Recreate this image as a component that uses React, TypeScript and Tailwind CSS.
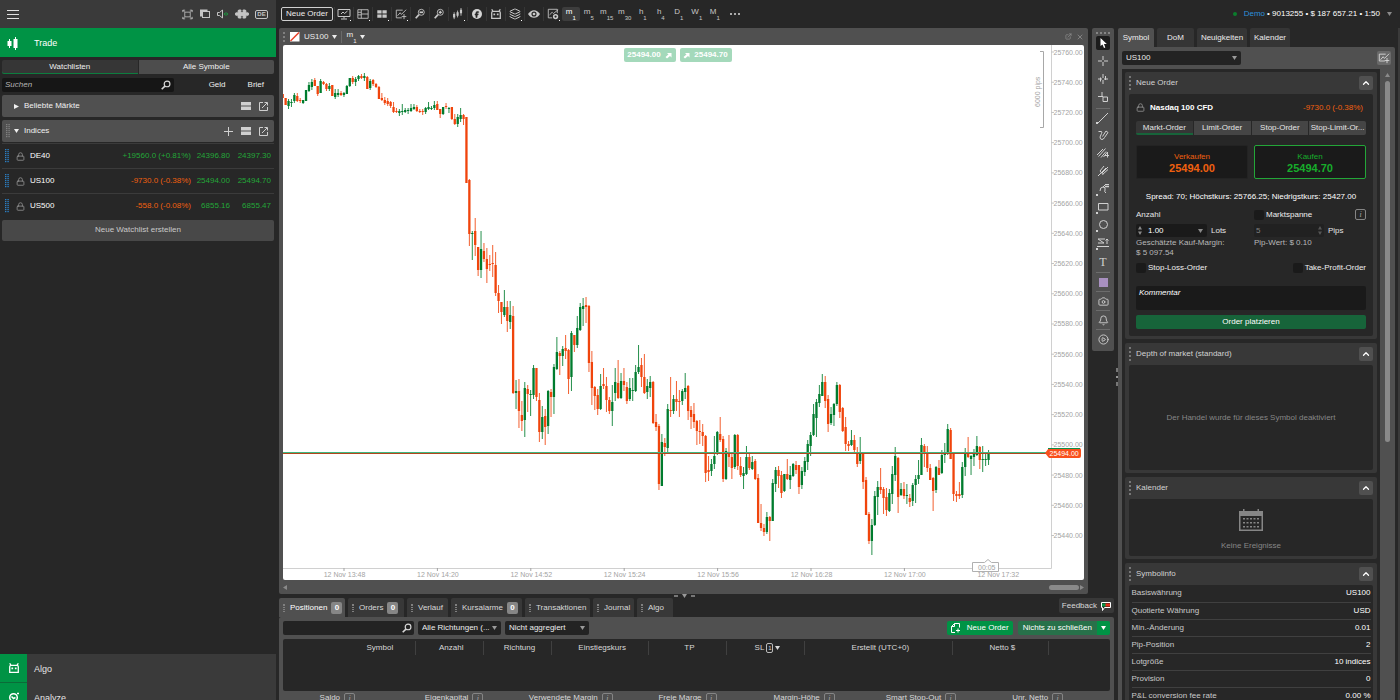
import React from 'react';
import {
  Bell,
  Camera,
  ChevronUp,
  CirclePlay,
  ExternalLink,
  Facebook,
  Layers,
  Lock,
  Puzzle,
  Search,
  X,
} from 'lucide-react';

/* ---------- data ---------- */

// [open, high, low, close] per minute, in chart units (y grows downwards)
const CANDLES: number[][] = [
  [94, 94, 98, 98], [98, 98, 105, 105], [106, 99, 109, 101], [103, 99, 107, 102], [101, 93, 103, 95],
  [96, 93, 102, 101], [100, 98, 103, 101], [103, 100, 104, 100], [101, 90, 101, 90], [91, 82, 92, 85],
  [87, 79, 90, 82], [80, 78, 86, 86], [86, 86, 96, 94], [93, 79, 93, 81], [82, 81, 85, 84],
  [84, 83, 91, 89], [89, 83, 91, 86], [85, 85, 96, 96], [97, 89, 99, 93], [95, 89, 97, 93],
  [93, 91, 96, 95], [95, 92, 97, 93], [94, 85, 94, 86], [86, 78, 87, 78], [78, 76, 84, 82],
  [82, 77, 86, 79], [79, 75, 81, 76], [76, 74, 79, 78], [78, 73, 81, 76], [77, 76, 89, 89],
  [88, 79, 90, 81], [80, 79, 86, 84], [84, 83, 88, 87], [87, 86, 99, 99], [98, 93, 101, 100],
  [100, 97, 105, 103], [101, 98, 106, 104], [102, 101, 108, 106], [107, 102, 113, 112], [111, 108, 113, 112],
  [113, 109, 116, 111], [112, 104, 115, 111], [112, 108, 113, 110], [111, 108, 114, 110], [111, 104, 112, 108],
  [109, 104, 110, 107], [107, 105, 112, 111], [111, 109, 113, 112], [111, 109, 115, 112], [112, 107, 114, 108],
  [109, 102, 110, 107], [109, 106, 110, 108], [108, 101, 110, 105], [104, 101, 110, 110], [109, 109, 118, 114],
  [114, 107, 115, 107], [106, 103, 109, 107], [109, 107, 113, 108], [107, 107, 120, 119], [119, 114, 125, 124],
  [124, 114, 127, 117], [119, 108, 122, 115], [115, 114, 125, 119], [117, 117, 183, 183], [180, 179, 246, 234],
  [234, 231, 260, 233], [231, 218, 256, 245], [247, 247, 276, 270], [270, 231, 278, 249], [251, 243, 262, 259],
  [259, 248, 283, 269], [264, 255, 271, 265], [263, 245, 277, 264], [265, 252, 296, 293], [293, 285, 313, 301],
  [302, 302, 324, 312], [315, 290, 317, 307], [307, 301, 332, 321], [322, 301, 329, 315], [316, 306, 394, 393],
  [393, 380, 409, 391], [391, 379, 428, 411], [415, 401, 431, 421], [420, 382, 437, 388], [389, 385, 412, 394],
  [395, 390, 416, 394], [395, 365, 399, 368], [368, 368, 401, 397], [400, 393, 442, 432], [432, 406, 439, 417],
  [416, 409, 445, 427], [426, 390, 434, 391], [392, 389, 417, 397], [397, 364, 414, 367], [369, 337, 370, 352],
  [353, 351, 375, 356], [356, 346, 366, 349], [348, 335, 359, 351], [350, 349, 394, 379], [377, 331, 391, 333],
  [335, 335, 352, 345], [345, 316, 348, 328], [330, 303, 331, 307], [309, 298, 326, 306], [305, 297, 323, 307],
  [306, 305, 372, 363], [362, 351, 405, 388], [387, 386, 410, 396], [395, 389, 415, 409], [409, 374, 410, 386],
  [384, 368, 389, 386], [386, 377, 412, 400], [400, 397, 414, 411], [411, 385, 426, 402], [393, 368, 401, 382],
  [383, 360, 399, 398], [398, 373, 399, 381], [381, 368, 391, 385], [387, 382, 404, 401], [399, 378, 401, 388],
  [391, 378, 401, 390], [391, 365, 392, 372], [372, 345, 374, 367], [365, 358, 387, 377], [377, 354, 394, 393],
  [392, 379, 399, 386], [388, 376, 397, 382], [382, 381, 424, 423], [422, 414, 431, 427], [426, 424, 490, 484],
  [486, 434, 486, 442], [443, 438, 456, 447], [448, 404, 453, 409], [410, 377, 417, 411], [411, 395, 414, 399],
  [399, 381, 411, 402], [401, 390, 417, 402], [401, 389, 405, 391], [392, 373, 399, 388], [386, 385, 420, 411],
  [410, 406, 429, 417], [414, 403, 428, 422], [421, 420, 445, 431], [431, 420, 444, 432], [432, 424, 446, 436],
  [436, 435, 482, 473], [470, 456, 481, 472], [471, 459, 476, 464], [464, 436, 469, 456], [453, 431, 455, 432],
  [434, 417, 442, 440], [439, 436, 482, 479], [479, 448, 480, 451], [452, 435, 467, 457], [457, 452, 479, 468],
  [467, 434, 469, 435], [435, 434, 470, 466], [466, 457, 477, 475], [476, 467, 489, 473], [474, 446, 475, 457],
  [457, 453, 470, 468], [469, 456, 470, 462], [461, 459, 480, 479], [478, 474, 523, 523], [523, 504, 531, 528],
  [528, 524, 536, 532], [532, 512, 534, 517], [517, 516, 541, 521], [521, 479, 521, 483], [484, 467, 492, 470],
  [470, 466, 488, 476], [475, 471, 498, 493], [491, 474, 492, 474], [474, 459, 480, 479], [480, 466, 489, 475],
  [476, 463, 477, 464], [465, 461, 474, 470], [465, 465, 494, 487], [485, 467, 489, 471], [472, 457, 476, 461],
  [462, 440, 470, 444], [446, 432, 456, 435], [435, 404, 436, 414], [418, 399, 437, 402], [403, 385, 407, 394],
  [396, 374, 396, 382], [382, 376, 408, 401], [399, 395, 432, 424], [423, 407, 425, 414], [415, 403, 426, 404],
  [404, 382, 406, 385], [385, 384, 418, 412], [408, 407, 432, 431], [427, 417, 451, 444], [444, 441, 451, 446],
  [445, 430, 446, 440], [440, 435, 453, 450], [452, 447, 467, 464], [461, 437, 464, 453], [453, 452, 489, 482],
  [480, 477, 515, 515], [514, 512, 544, 541], [541, 519, 555, 525], [525, 491, 526, 496], [497, 481, 515, 487],
  [487, 468, 494, 490], [489, 487, 514, 498], [497, 488, 516, 510], [511, 489, 512, 493], [494, 466, 504, 474],
  [475, 447, 481, 456], [458, 457, 513, 497], [495, 483, 496, 489], [489, 482, 499, 496], [496, 484, 504, 495],
  [498, 494, 507, 502], [501, 483, 506, 485], [485, 475, 503, 479], [479, 460, 484, 475], [475, 438, 475, 445],
  [446, 444, 467, 454], [454, 446, 472, 468], [468, 464, 480, 480], [478, 477, 511, 491], [490, 466, 493, 467],
  [468, 460, 475, 475], [473, 450, 474, 455], [455, 443, 463, 453], [454, 424, 455, 429], [430, 428, 459, 459],
  [454, 453, 501, 494], [494, 491, 502, 496], [494, 482, 499, 496], [495, 462, 498, 467], [467, 448, 476, 452],
  [452, 437, 458, 457], [459, 455, 475, 456], [457, 449, 466, 454], [455, 436, 456, 446], [447, 446, 469, 460],
  [460, 446, 472, 459], [460, 452, 466, 459], [460, 450, 465, 452],
];

const FIRST_X = 282.7;
const STEP_X = 2.9167;

const WATCHLIST = [
  { symbol: 'DE40', change: '+19560.0 (+0.81%)', up: true, bid: '24396.80', ask: '24397.30' },
  { symbol: 'US100', change: '-9730.0 (-0.38%)', up: false, bid: '25494.00', ask: '25494.70' },
  { symbol: 'US500', change: '-558.0 (-0.08%)', up: false, bid: '6855.16', ask: '6855.47' },
];

const TIMEFRAMES = [
  ['m', '1'], ['m', '5'], ['m', '15'], ['m', '30'], ['h', '1'], ['h', '4'], ['D', '1'], ['W', '1'], ['M', '1'],
];

const TIME_LABELS = [
  '12 Nov 13:48', '12 Nov 14:20', '12 Nov 14:52', '12 Nov 15:24',
  '12 Nov 15:56', '12 Nov 16:28', '12 Nov 17:00', '12 Nov 17:32',
];

const POSITION_TABS = [
  { label: 'Positionen', count: 0, width: 'w-[66px]' },
  { label: 'Orders', count: 0, width: 'w-[56px]' },
  { label: 'Verlauf', width: 'w-[41px]' },
  { label: 'Kursalarme', count: 0, width: 'w-[71px]' },
  { label: 'Transaktionen', width: 'w-[65px]' },
  { label: 'Journal', width: 'w-[41px]' },
  { label: 'Algo', width: 'w-[36px]' },
];

const SYMBOL_INFO = [
  ['Basiswährung', 'US100'],
  ['Quotierte Währung', 'USD'],
  ['Min.-Änderung', '0.01'],
  ['Pip-Position', '2'],
  ['Lotgröße', '10 indices'],
  ['Provision', '0'],
  ['P&L conversion fee rate', '0.00 %'],
];

const BALANCES = ['Saldo', 'Eigenkapital', 'Verwendete Margin', 'Freie Marge', 'Margin-Höhe', 'Smart Stop-Out', 'Unr. Netto'];

/* ---------- small parts ---------- */

function Grip({ blue = false }: { blue?: boolean }) {
  return (
    <svg className={`w-1 h-3.5 shrink-0 ${blue ? 'text-[#2b7fc4]' : 'text-[#808080]'}`} viewBox="0 0 4 14" fill="currentColor">
      {[0, 2, 4, 6, 8, 10, 12].map((y) => (
        <React.Fragment key={y}>
          <rect x="0" y={y} width="1.4" height="1.2" />
          <rect x="2.4" y={y} width="1.4" height="1.2" />
        </React.Fragment>
      ))}
    </svg>
  );
}

function Caret({ className = '' }: { className?: string }) {
  return (
    <svg className={`w-[5px] h-1 shrink-0 ${className}`} viewBox="0 0 5 4" fill="currentColor">
      <path d="M0 0h5L2.5 4z" />
    </svg>
  );
}

function Icon({ children, size = 'size-3.5' }: { children: React.ReactNode; size?: string }) {
  return (
    <svg className={`${size} shrink-0`} viewBox="0 0 14 14" fill="none" stroke="currentColor" strokeWidth="1">
      {children}
    </svg>
  );
}

function BotIcon() {
  return (
    <Icon size="size-3">
      <path strokeWidth="1.500" d="M2 12V5.500q0-1.500 1.500-1.500h7q1.500 0 1.500 1.500V12zM3.500 4L2 1.500M10.500 4L12 1.500" />
      <path fill="currentColor" stroke="none" d="M4 6.500h2v2H4zM8 6.500h2v2H8z" />
    </Icon>
  );
}

function SearchIcon() {
  return (
    <Icon size="size-2.5">
      <circle cx="8.500" cy="5.500" r="4" strokeWidth="1.600" />
      <path strokeWidth="2.200" d="M5.500 8.500L1 13" />
    </Icon>
  );
}

function Timeframe({ unit, n }: { unit: string; n: string }) {
  return (
    <span className="inline-flex h-3.5">
      <span className="leading-2.5">{unit}</span>
      <span className="self-end text-[6px] leading-1.5">{n}</span>
    </span>
  );
}

function InfoButton() {
  return (
    <button aria-label="Info" className="size-[11px] rounded-xs border border-[#858585] text-[8px] leading-[9px] italic font-['Liberation_Serif',serif] text-[#a8a8a8] text-center">
      i
    </button>
  );
}

interface DropDownProps {
  label: string;
  value: string;
  className: string;
}

function DropDown({ label, value, className }: DropDownProps) {
  return (
    <div className={`relative ${className}`}>
      <select aria-label={label} defaultValue={value} className="appearance-none block w-full h-3.5 rounded-xs bg-[#232323] pl-1 pr-2 text-[8px] leading-3.5 text-[#ececec]">
        <option>{value}</option>
      </select>
      <Caret className="absolute right-1 top-[5px] text-[#9a9a9a] pointer-events-none" />
    </div>
  );
}

/* ---------- left sidebar ---------- */

function GroupHeader({ name, open }: { name: string; open?: boolean }) {
  return (
    <div className="flex items-center h-[22px] rounded-xs bg-[#505050] px-1 text-[#f0f0f0]">
      <span className="w-2">{open && <Grip />}</span>
      <button className="flex items-center flex-1 gap-[5px]">
        {open ? (
          <Caret />
        ) : (
          <svg className="w-[5px] h-[5px]" viewBox="0 0 5 5" fill="currentColor"><path d="M0 0v5l5-2.5z" /></svg>
        )}
        {name}
      </button>
      <div className="flex items-center gap-2 text-[#cfcfcf]">
        {open && (
          <button aria-label="Hinzufügen">
            <svg className="size-[9px]" viewBox="0 0 9 9" stroke="currentColor"><path d="M4.500 0v9M0 4.500h9" /></svg>
          </button>
        )}
        <button aria-label="Ansicht">
          <svg className="w-2.5 h-2" viewBox="0 0 10 8" fill="currentColor"><path d="M0 0h10v3.5H0zM0 4.5h10V8H0z" /></svg>
        </button>
        <button aria-label="Abdocken" className="pr-0.5">
          <svg className="size-[9px]" viewBox="0 0 9 9" fill="none" stroke="currentColor"><path d="M4 .5H.5v8h8V5M3 6l5-5M5.500.5h3v3" /></svg>
        </button>
      </div>
    </div>
  );
}

function Sidebar() {
  return (
    <aside className="w-69 shrink-0 flex flex-col">
      <header className="flex items-center h-7 shrink-0 bg-[#3a3a3a] pl-[7px] pr-2 text-[#c4c4c4]">
        <button aria-label="Menü" className="mr-auto flex flex-col gap-[3px]">
          <span className="w-3 h-px bg-[#e0e0e0]" />
          <span className="w-3 h-px bg-[#e0e0e0]" />
          <span className="w-3 h-px bg-[#e0e0e0]" />
        </button>
        <div className="flex items-center gap-[7px]">
          <button aria-label="Vollbild">
            <Icon size="size-[11px]"><path d="M1 4V1.500h3M10 1.500h3V4M13 10v2.500h-3M4 12.500H1V10M3.500 4h7v6h-7zM1 1.500l2.500 2.500M13 1.500L10.500 4M13 12.500L10.500 10M1 12.500L3.500 10" /></Icon>
          </button>
          <button aria-label="Fenster">
            <svg className="w-2.5 h-2.5" viewBox="0 0 10 10" fill="none" stroke="currentColor"><path d="M1 7.500V1.500h6.500" strokeWidth="2" /><rect x="2.500" y="2.500" width="7" height="6" /></svg>
          </button>
          <button aria-label="Ton">
            <svg className="w-3 h-2.5" viewBox="0 0 12 10" fill="none" stroke="currentColor"><path d="M.5 3.500h2l3-2.500v8l-3-2.500h-2z" /><path stroke="#1f8a3d" d="M7.500 4v2M9 3v4M10.500 4v2" /></svg>
          </button>
          <button aria-label="Plugins"><Puzzle className="size-3 rotate-45 fill-current" /></button>
          <button className="w-[13px] h-[9px] rounded-xs border border-current text-[6px] leading-[7px] font-bold">DE</button>
        </div>
      </header>

      <button className="flex items-center h-[29px] shrink-0 bg-[#009345] text-[9px] text-white text-left">
        <svg className="w-[11px] h-3.5 ml-[7px] mr-4" viewBox="0 0 11 14" fill="currentColor">
          <path d="M.5 5h4v5h-4zM2 3h1v9H2zM6.500 3h4v9h-4zM8 1h1v13H8z" />
        </svg>
        Trade
      </button>

      <div className="flex flex-col gap-[3px] pt-[3px] px-0.5">
        <div role="tablist" className="flex h-3.5 text-[#efefef] gap-px">
          <button role="tab" aria-selected="true" className="flex-1 rounded-l-xs bg-[#363636] shadow-[inset_0_-1px_0_#0d7d3f]">Watchlisten</button>
          <button role="tab" aria-selected="false" className="flex-1 rounded-r-xs bg-[#4d4d4d]">Alle Symbole</button>
        </div>
        <div className="flex items-center h-[15px] text-[#efefef]">
          <label className="flex items-center w-[172px] h-3.5 rounded-xs bg-[#161616] px-[3px] text-[#d8d8d8]">
            <input aria-label="Suchen" placeholder="Suchen" className="flex-1 min-w-0 italic placeholder:text-[#b5b5b5] outline-none" />
            <SearchIcon />
          </label>
          <span className="flex-1 text-right pr-[22px]">Geld</span>
          <span className="mr-2.5">Brief</span>
        </div>
        <GroupHeader name="Beliebte Märkte" />
        <GroupHeader name="Indices" open />
      </div>

      <table className="mt-px mx-0.5 table-fixed">
        <colgroup>
          <col />
          <col className="w-[100px]" />
          <col className="w-[39px]" />
          <col className="w-11" />
        </colgroup>
        <tbody>
          {WATCHLIST.map((row) => (
            <tr key={row.symbol} className="h-[25px] border-t border-[#3b3b3b] text-right text-[#23a638]">
              <td className="text-left text-white">
                <div className="flex items-center pl-[3px]">
                  <Grip blue />
                  <Lock className="size-[9px] ml-[7px] mr-[5px] text-[#9a9a9a]" />
                  {row.symbol}
                </div>
              </td>
              <td className={row.up ? 'text-[#23a638]' : 'text-[#f0600f]'}>{row.change}</td>
              <td>{row.bid}</td>
              <td className="pr-[3px]">{row.ask}</td>
            </tr>
          ))}
        </tbody>
      </table>
      <button className="mx-0.5 mt-px h-[21px] rounded-xs bg-[#484848] text-[#c8c8c8]">Neue Watchlist erstellen</button>

      <nav className="mt-auto shrink-0 h-[46px] overflow-hidden bg-[#3a3a3a] text-[9px] text-[#e6e6e6]">
        <button className="flex items-center w-full h-[29px] gap-[7px]">
          <span className="flex items-center justify-center w-[27px] h-full bg-[#009345] border-b border-[#0b6b38] text-white">
            <BotIcon />
          </span>
          Algo
        </button>
        <button className="flex items-center w-full h-[29px] gap-[7px]">
          <span className="flex items-center justify-center w-[27px] h-full bg-[#009345]">
            <svg className="size-3 text-white" viewBox="0 0 12 12" fill="none" stroke="currentColor" strokeWidth="1.500"><circle cx="5.500" cy="5.500" r="3.800" /><path d="M3.500 4.500l2 2 2-1M9 1.500h2M2 10l-1.500 1.500M9 10l1.500 1.500" /></svg>
          </span>
          Analyze
        </button>
      </nav>
    </aside>
  );
}

/* ---------- toolbar ---------- */

const TOOLBAR_ICONS = [
  { name: 'Arbeitsbereich', dot: true, icon: <Icon><path d="M1 2.500h12v7H1zM7 9.500v2M4 12h6M4 7l2-2 1.500 1.500L10.500 4" /></Icon> },
  { name: 'Layout', dot: true, icon: <Icon size="size-3"><path d="M1 2h12v10H1zM5 2v10M5 7h8M1 5h4M1 8h4" /></Icon> },
  { name: 'Kacheln', dot: true, icon: <Icon size="size-3"><path fill="currentColor" stroke="none" d="M1.500 2.500h5V6.500h-5zM7.500 2.500h5V6.500h-5zM1.500 7.500h5v4h-5zM7.500 7.500h5v4h-5z" /></Icon> },
  { name: 'Neuer Chart', dot: true, icon: <Icon size="size-3"><path d="M9 2.500H1.500v9H8M3 9l3-3.500 1.500 2L13 2M10.500 7v6M7.800 10h5.400" /></Icon> },
  { name: 'Verkleinern', icon: <Icon size="size-3"><circle cx="8.500" cy="5" r="3.500" /><path strokeWidth="2" d="M5.800 7.800L2 12" /><path strokeWidth="2" d="M6.500 5h4" /></Icon> },
  { name: 'Vergrößern', icon: <Icon size="size-3"><circle cx="8.500" cy="5" r="3.500" /><path strokeWidth="2" d="M5.800 7.800L2 12" /><path strokeWidth="1.500" d="M6.800 5h3.500M8.500 3.300v3.400" /></Icon> },
  { name: 'Chart-Typ', dot: true, icon: <Icon size="size-3"><path d="M2.500 5v8M6.500 3v8M10.500 0v9" /><path strokeWidth="2.500" d="M2.500 7v4M6.500 5v4M10.500 2v4" /></Icon> },
  { name: 'Indikatoren', icon: <Facebook className="size-[7px] text-[#2a2a2a] fill-current" />, round: true },
  { name: 'cBots', icon: <BotIcon /> },
  { name: 'Ebenen', dot: true, icon: <Layers className="size-3" /> },
  { name: 'Sichtbarkeit', icon: <Icon size="size-3"><path fill="currentColor" stroke="none" d="M0 7q3-4.500 7-4.500T14 7q-3 4.500-7 4.500T0 7z" /><circle cx="7" cy="7" r="2.300" fill="currentColor" stroke="#272727" strokeWidth="1.400" /></Icon> },
  { name: 'Einstellungen', dot: true, icon: <Icon size="size-3"><path d="M12 6V1.500H1.500v10H6M3 8l3-3 1.500 1.500L13 2" /><circle cx="10" cy="10" r="2.200" strokeWidth="1.800" /></Icon> },
];

function Toolbar() {
  return (
    <div className="flex items-center h-7 shrink-0 pl-[2px] text-[#c8c8c8]">
      <button className="h-3.5 px-1 mr-px rounded-xs border border-[#cfcfcf] text-[#ededed] leading-3">Neue Order</button>
      {TOOLBAR_ICONS.map((item) => (
        <button key={item.name} aria-label={item.name} className="relative flex items-center justify-center w-[19px] h-3.5 border-l border-[#363636]">
          {item.round ? (
            <span className="flex items-center justify-center size-2.5 rounded-full bg-[#d4d4d4]">{item.icon}</span>
          ) : (
            item.icon
          )}
          {item.dot && <span className="absolute right-0.5 bottom-0 size-px bg-white" />}
        </button>
      ))}
      {TIMEFRAMES.map(([unit, n], i) => (
        <button key={unit + n} className={`flex justify-center w-[18px] h-3.5 rounded-xs ${i === 0 ? 'bg-[#3d3d3d] text-white' : ''}`}>
          <Timeframe unit={unit} n={n} />
        </button>
      ))}
      <button aria-label="Mehr" className="ml-1.5 flex gap-0.5">
        <span className="size-0.5 rounded-full bg-[#d8d8d8]" />
        <span className="size-0.5 rounded-full bg-[#d8d8d8]" />
        <span className="size-0.5 rounded-full bg-[#d8d8d8]" />
      </button>
    </div>
  );
}

/* ---------- chart ---------- */

function PriceChart() {
  return (
    <svg className="block w-full h-full" viewBox="283 45 801 535" fill="none">
      {CANDLES.map(([open, high, low, close], i) => {
        const x = FIRST_X + i * STEP_X;
        const color = close > open ? '#f0440c' : '#007c2e';
        return (
          <g key={i} fill={color}>
            <rect x={x - 0.5} y={high} width="1" height={low - high} opacity="0.85" />
            <rect x={x - 1.15} y={Math.min(open, close)} width="2.3" height={Math.abs(close - open)} />
          </g>
        );
      })}

      {/* last price */}
      <path d="M283 452.500H1046" stroke="#3fb882" />
      <path d="M283 453.500H1046" stroke="#b4461c" />

      {/* axes */}
      <path d="M283 568.500H1051.500V45" stroke="#d0d0d0" />
      <g fontSize="7" fill="#a3a3a3">
        {Array.from({ length: 17 }, (_, i) => (
          <g key={i}>
            <path d={`M1051 ${52 + i * 30.22}h3`} stroke="#c4c4c4" />
            <text x="1053.500" y={54.5 + i * 30.22}>{`${25760 - i * 20}.00`}</text>
          </g>
        ))}
        {TIME_LABELS.map((label, i) => (
          <g key={label}>
            <path d={`M${344 + i * 93.4} 568v3`} stroke="#a3a3a3" />
            <text x={344.5 + i * 93.4} y="577" textAnchor="middle">{label}</text>
          </g>
        ))}
      </g>

      {/* price tag */}
      <path d="M1045 453l4-5h30q2 0 2 2v6q0 2-2 2h-30z" fill="#f9501c" />
      <path d="M1048 448.500h32" stroke="#0a8f4a" />
      <text x="1049.500" y="456" fontSize="7" fill="#fff">25494.00</text>

      {/* candle countdown */}
      <path d="M972.500 562.500h12l3.500-3 3.500 3h7v9h-26z" fill="#fff" stroke="#b0b0b0" />
      <text x="978" y="570" fontSize="7" fill="#a3a3a3">00:05</text>

      {/* range ruler */}
      <path d="M1040 51.500h3.500v76h-3.500" stroke="#a8a8a8" />
      <text x="1040" y="107" fontSize="7" fill="#a3a3a3" transform="rotate(-90 1040 107)">6000 pips</text>
    </svg>
  );
}

function ChartPanel() {
  return (
    <section className="flex-1 min-w-0 flex flex-col rounded-xs bg-[#505050] px-1">
      <div className="flex items-center h-[17px] shrink-0 text-[#ececec]">
        <span className="w-1 h-2.5 border-l-2 border-dotted border-[#808080]" />
        <svg className="size-2.5 mx-[3px]" viewBox="0 0 10 10"><path fill="#fff" d="M0 0h9.500v9.500H0z" /><path stroke="#e8402a" strokeWidth="1.500" d="M.5 9L9 .5" /></svg>
        <button className="flex items-center gap-1 ml-[1px] pr-1 border-r border-[#6a6a6a]">US100 <Caret /></button>
        <button className="flex items-center gap-1 pl-1"><Timeframe unit="m" n="1" /> <Caret /></button>
        <button aria-label="Abdocken" className="ml-auto text-[#9a9a9a]"><ExternalLink className="size-[7px]" /></button>
        <button aria-label="Schließen" className="ml-1 text-[#9a9a9a]"><X className="size-2" /></button>
      </div>
      <div className="relative flex-1 min-h-0 rounded-xs bg-white">
        <PriceChart />
        <div className="absolute inset-x-0 top-[3px] pr-3 flex justify-center gap-1 text-white font-bold leading-3.5">
          <button className="flex items-center gap-1 h-3.5 w-13 justify-center rounded-xs bg-[#a4d9bb]">
            25494.00
            <svg className="size-[7px]" viewBox="0 0 7 7" fill="currentColor"><path d="M2 1h4.500v4.500L5 4 2 6.500.5 5 3.500 2.500z" /></svg>
          </button>
          <button className="flex items-center gap-1 h-3.5 w-13 justify-center rounded-xs bg-[#a4d9bb]">
            <svg className="size-[7px]" viewBox="0 0 7 7" fill="currentColor"><path d="M2 1h4.500v4.500L5 4 2 6.500.5 5 3.500 2.500z" /></svg>
            25494.70
          </button>
        </div>
      </div>
      <div className="flex items-center h-3.5 shrink-0 text-[#8a8a8a]">
        <svg className="w-1 h-[5px]" viewBox="0 0 4 5" fill="currentColor"><path d="M4 0v5L0 2.500z" /></svg>
        <span className="ml-auto mr-px w-[30px] h-[5px] rounded-full bg-[#8a8a8a]" />
        <svg className="w-1 h-[5px]" viewBox="0 0 4 5" fill="currentColor"><path d="M0 0v5l4-2.500z" /></svg>
      </div>
    </section>
  );
}

const DRAW_TOOLS = [
  { name: 'Fadenkreuz', icon: <Icon><path d="M7 2v4M7 8v4M2 7h4M8 7h4" /></Icon> },
  { name: 'Kerzenkreuz', icon: <Icon><path d="M7 2v4M7 8v4M2 7h4M8 7h4M4.500 5.500v4M9.500 4v4" /></Icon> },
  { name: 'Messkreuz', icon: <Icon><path d="M6 2v5M2 6.500h5M7 7h4.500v4.500H7z" /></Icon> },
  { name: 'Linie', rule: true, dot: true, icon: <Icon><path d="M2 12L12 2" /></Icon> },
  { name: 'Freihand', icon: <Icon><path d="M2.500 3.500h3q1 0 0 2l-1.500 3.500q0 2.500 2 2.500 1.500 0 2.500-2l3.500-5-2-1.500L6.500 8.500" /></Icon> },
  { name: 'Kanal', icon: <Icon><path d="M1 9l6-6M2.500 10.500l7-8M5 11.500l5-6M7.500 11l4-5v5.500M9 9.500h4" /></Icon> },
  { name: 'Heugabel', icon: <Icon><path d="M2 12l8-8M4 7l4-5M6.500 10.500l5.500-5M4 7l3 3.500M6 9l6-6" /></Icon> },
  { name: 'Fibonacci', dot: true, icon: <Icon><path d="M4 9q0-4 3-4t2 3q-1 2 1 3M7 5l3-3" /><path fill="currentColor" stroke="none" d="M9 2h4v1.200H9zM9 4h4v1.200H9z" /></Icon> },
  { name: 'Rechteck', dot: true, icon: <Icon><path d="M2.500 3.500h9.500v6.500H2.500z" /></Icon> },
  { name: 'Kreis', dot: true, icon: <Icon><circle cx="7.500" cy="6.500" r="4" /></Icon> },
  { name: 'Risiko', dot: true, icon: <Icon><path d="M2 3h7M2 3l6 4H2M1 10.500h12M11 8V3M9.500 4.500L11 3l1.500 1.500" /></Icon> },
];

function DrawingTools() {
  return (
    <div className="flex flex-col items-center w-[22px] h-[323px] shrink-0 rounded-xs bg-[#505050] px-1 pt-1 text-[#d0d0d0]">
      <span className="w-3.5 border-t-2 border-dotted border-[#858585]" />
      <button aria-label="Zeiger" className="flex items-center justify-center size-3.5 my-0.5 rounded-xs bg-[#1c1c1c]">
        <svg className="w-[7px] h-2.5" viewBox="0 0 7 10" fill="#fff"><path d="M.5 0v8l2-1.500L4 10l1.300-.6L4 6h2.800z" /></svg>
      </button>
      {DRAW_TOOLS.map((tool) => (
        <button key={tool.name} aria-label={tool.name} className={`relative flex items-center justify-center w-full h-[18px] ${tool.rule ? 'border-t border-[#6c6c6c] mt-0.5' : ''}`}>
          {tool.icon}
          {tool.dot && <span className="absolute left-0 bottom-0.5 size-0.5 rounded-full bg-white" />}
        </button>
      ))}
      <button aria-label="Text" className="w-full h-5 font-['Liberation_Serif',serif] text-[12px] leading-5">T</button>
      <button aria-label="Farbe" className="flex items-center justify-center w-full h-[19px] border-t border-[#6c6c6c]">
        <span className="size-[9px] bg-[#a890c0]" />
      </button>
      <button aria-label="Foto" className="flex items-center justify-center w-full h-[19px] border-t border-[#6c6c6c]"><Camera className="size-[11px]" /></button>
      <button aria-label="Alarm" className="flex items-center justify-center w-full h-[19px] border-t border-[#6c6c6c]"><Bell className="size-[11px]" /></button>
      <button aria-label="Replay" className="flex items-center justify-center w-full h-[19px] border-t border-[#6c6c6c]"><CirclePlay className="size-[11px]" /></button>
    </div>
  );
}

/* ---------- positions ---------- */

function PositionsPanel() {
  return (
    <section className="h-[106px] shrink-0 flex flex-col overflow-hidden text-[#d8d8d8]">
      <span className="flex justify-center h-1 gap-1 pr-6">
        <span className="w-1 h-0.5 mt-px bg-[#777]" />
        <Caret className="text-[#999]" />
        <span className="w-1 h-0.5 mt-px bg-[#777]" />
      </span>
      <div className="flex items-end h-[19px] shrink-0">
        <div role="tablist" className="flex gap-[3px]">
          {POSITION_TABS.map((tab, i) => (
            <button
              key={tab.label}
              role="tab"
              aria-selected={i === 0}
              className={`flex items-center h-[19px] pl-1 rounded-t-xs ${tab.width} ${i === 0 ? 'bg-[#505050] text-white' : 'bg-[#383838]'}`}
            >
              <span className="w-0.5 h-2 mr-[5px] border-x border-dotted border-[#808080]" />
              {tab.label}
              {tab.count !== undefined && (
                <span className="ml-1 w-[11px] h-3 rounded-xs bg-[#868686] text-white font-bold leading-3">{tab.count}</span>
              )}
            </button>
          ))}
        </div>
        <button className="flex items-center gap-1 ml-auto mb-1 h-[15px] px-[3px] rounded-xs bg-[#383838]">
          Feedback
          <svg className="w-2.5 h-2.5" viewBox="0 0 10 10"><path fill="#222" stroke="#fff" d="M.5 1.500h9v5h-6l-2 3v-3h-1z" /><path fill="#0a9345" d="M1 2.500h4v3H1z" /><path fill="#e8301c" d="M4.500 2.500h4.500v3H4.500z" /></svg>
        </button>
      </div>
      <div className="flex-1 rounded-t-xs bg-[#505050] px-1 pt-1">
        <div className="flex items-center h-3.5 gap-1">
          <label className="flex items-center w-[131px] h-3.5 px-0.5 rounded-xs bg-[#232323] text-[#d8d8d8]">
            <input aria-label="Positionen durchsuchen" className="flex-1 min-w-0 outline-none" />
            <SearchIcon />
          </label>
          <DropDown label="Richtung" value="Alle Richtungen (..." className="w-[83px]" />
          <DropDown label="Aggregation" value="Nicht aggregiert" className="w-[84px]" />
          <button className="flex items-center gap-1.5 ml-auto h-3.5 px-1 rounded-xs bg-[#009345] text-white">
            <svg className="size-2.5" viewBox="0 0 10 10" fill="none" stroke="currentColor"><path d="M4 9.500H.5v-6l3-3h5v4M3.500.5v3h-3M7 5.500v4M5 7.500h4" /></svg>
            Neue Order
          </button>
          <div className="flex h-3.5 ml-px rounded-xs overflow-hidden">
            <button className="px-[5px] bg-[#28714a] text-white">Nichts zu schließen</button>
            <button aria-label="Mehr Optionen" className="flex items-center justify-center w-[13px] bg-[#009345] text-white"><Caret /></button>
          </div>
        </div>
        <div className="mt-1 h-[52px] rounded-xs bg-[#272727] pt-0.5">
          <table className="w-full table-fixed">
            <thead>
              <tr className="h-3.5 leading-3 [&>th]:font-normal [&>th]:border-r [&>th]:border-[#404040] [&>th]:pl-1">
                <th className="w-[7%] border-none!" />
                <th className="w-[9%]">Symbol</th>
                <th className="w-[8.200%]">Anzahl</th>
                <th className="w-[8.300%]">Richtung</th>
                <th className="w-[11.700%]">Einstiegskurs</th>
                <th className="w-[9.400%]">TP</th>
                <th className="w-[9.500%]">
                  <span className="inline-flex items-center gap-0.5">SL <span className="w-[7px] h-2.5 border border-[#bbb] rounded-xs text-[6px] leading-2">1</span><Caret /></span>
                </th>
                <th className="w-[17.800%]">Erstellt (UTC+0)</th>
                <th className="w-[11.700%]">Netto $</th>
                <th className="border-none!" />
              </tr>
            </thead>
          </table>
        </div>
        <div className="grid grid-cols-7 -ml-1 mr-3.5 pt-px">
          {BALANCES.map((label) => (
            <div key={label} className="flex items-center justify-center gap-1 whitespace-nowrap">{label} <InfoButton /></div>
          ))}
        </div>
      </div>
    </section>
  );
}

/* ---------- right panel ---------- */

function Card({ title, children }: { title: string; children: React.ReactNode }) {
  return (
    <section className="rounded-xs bg-[#383838] px-1 pb-[3px]">
      <header className="flex items-center h-[22px] text-[#d2d2d2]">
        <span className="w-[3px] h-3.5 border-l-2 border-dotted border-[#777]" />
        <h2 className="flex-1 pl-1">{title}</h2>
        <button aria-label="Einklappen" className="flex items-center justify-center size-3.5 rounded-xs bg-[#505050] text-white">
          <ChevronUp className="size-2.5" strokeWidth={3} />
        </button>
      </header>
      <div className="rounded-xs bg-[#272727]">{children}</div>
    </section>
  );
}

function CheckBox({ label }: { label: string }) {
  return (
    <label className="flex items-center gap-0.5 text-[#efefef]">
      <input type="checkbox" className="appearance-none size-2.5 rounded-xs bg-[#1a1a1a] checked:bg-[#009345]" />
      {label}
    </label>
  );
}

function Spinner() {
  return (
    <svg className="w-1 h-[9px] shrink-0" viewBox="0 0 4 9" fill="currentColor"><path d="M0 3.500h4L2 0zM0 5.500h4L2 9z" /></svg>
  );
}

function NewOrder() {
  return (
    <form className="px-[7px] pt-2 pb-[7px] text-[#e4e4e4]" onSubmit={(e) => e.preventDefault()}>
      <div className="flex items-center h-[11px] pr-[3px]">
        <Lock className="size-[9px] text-[#9a9a9a]" />
        <h3 className="pl-[5px] flex-1 font-bold text-white">Nasdaq 100 CFD</h3>
        <span className="text-[#f0600f]">-9730.0 (-0.38%)</span>
      </div>
      <div role="tablist" className="mt-2 grid grid-cols-4 gap-px h-3.5 rounded-xs overflow-hidden">
        {['Markt-Order', 'Limit-Order', 'Stop-Order', 'Stop-Limit-Or...'].map((label, i) => (
          <button key={label} type="button" role="tab" aria-selected={i === 0} className={`whitespace-nowrap ${i === 0 ? 'bg-[#363636] shadow-[inset_0_-2px_0_#17643a]' : 'bg-[#454545]'}`}>
            {label}
          </button>
        ))}
      </div>
      <div className="mt-2.5 grid grid-cols-2 gap-1.5">
        <button type="button" className="h-[34px] pt-0.5 rounded-xs border border-[#232323] bg-[#1a1a1a] text-[#f0600f]">
          <span className="block leading-2.5">Verkaufen</span>
          <span className="block text-[11px] leading-3 font-bold">25494.00</span>
        </button>
        <button type="button" className="h-[34px] pt-0.5 rounded-xs border border-[#23a638] bg-[#1a1a1a] text-[#17ad2b]">
          <span className="block leading-2.5">Kaufen</span>
          <span className="block text-[11px] leading-3 font-bold">25494.70</span>
        </button>
      </div>
      <p className="mt-3 text-center whitespace-nowrap text-white">Spread: 70; Höchstkurs: 25766.25; Niedrigstkurs: 25427.00</p>
      <div className="mt-1.5 grid grid-cols-2 gap-x-1.5">
        <div>
          <label htmlFor="lots" className="block h-[15px] leading-3">Anzahl</label>
          <div className="flex items-center gap-1">
            <span className="flex items-center w-[71px] h-[13px] px-0.5 rounded-xs bg-[#1a1a1a] text-[#8a8a8a]">
              <Spinner />
              <input id="lots" defaultValue="1.00" className="flex-1 min-w-0 pl-1.5 text-white outline-none" />
              <Caret className="mr-0.5" />
            </span>
            Lots
          </div>
          <p className="leading-2.5 pt-px text-[#b8b8b8]">Geschätzte Kauf-Margin:<br />$ 5 097.54</p>
        </div>
        <div>
          <div className="flex justify-between h-[15px] items-start">
            <CheckBox label="Marktspanne" />
            <InfoButton />
          </div>
          <div className="flex items-center gap-1">
            <span className="flex items-center w-[70px] h-[13px] px-0.5 rounded-xs bg-[#212121] text-[#555]">
              <input aria-label="Pips" defaultValue="5" disabled className="flex-1 min-w-0 text-[#808080]" />
              <Spinner />
            </span>
            Pips
          </div>
          <p className="leading-2.5 pt-px text-[#b8b8b8]">Pip-Wert: $ 0.10</p>
        </div>
      </div>
      <div className="mt-[3px] flex justify-between h-3.5 items-center">
        <CheckBox label="Stop-Loss-Order" />
        <CheckBox label="Take-Profit-Order" />
      </div>
      <textarea aria-label="Kommentar" placeholder="Kommentar" className="block w-full h-6 mt-[11px] px-[3px] py-px resize-none rounded-xs bg-[#1a1a1a] italic placeholder:text-white" />
      <button className="w-full h-3.5 mt-[5px] rounded-xs bg-[#17643a] text-white">Order platzieren</button>
    </form>
  );
}

function SymbolPanel() {
  return (
    <aside className="w-[277px] shrink-0 flex flex-col overflow-hidden">
      <div role="tablist" className="flex gap-[3px] h-[19px] shrink-0 text-[#ececec]">
        <button role="tab" aria-selected="true" className="w-9 rounded-t-xs bg-[#505050]">Symbol</button>
        <button role="tab" aria-selected="false" className="w-[37px] rounded-t-xs bg-[#353535]">DoM</button>
        <button role="tab" aria-selected="false" className="w-[50px] rounded-t-xs bg-[#353535]">Neuigkeiten</button>
        <button role="tab" aria-selected="false" className="w-10 rounded-t-xs bg-[#353535]">Kalender</button>
      </div>
      <div className="flex-1 min-h-0 flex flex-col rounded-tr-xs bg-[#505050] pl-1 pr-1">
        <div className="flex items-center justify-between h-[22px] shrink-0">
          <DropDown label="Symbol" value="US100" className="w-[119px]" />
          <button aria-label="Neuer Chart" className="flex items-center justify-center size-3.5 rounded-xs bg-[#6a6a6a] text-[#dedede]">
            <Icon size="size-3"><path d="M9 2.500H1.500v8H8M3 9l3-3.500 1.500 2L13 2M10.500 7v6M7.800 10h5.400" /></Icon>
          </button>
        </div>
        <div className="flex-1 min-h-0 flex">
          <div className="flex-1 min-w-0 flex flex-col gap-1 overflow-hidden bg-[#272727] px-[3px] pt-[3px] [&>*]:shrink-0">
            <Card title="Neue Order"><NewOrder /></Card>
            <Card title="Depth of market (standard)">
              <p className="flex items-center justify-center h-[105px] text-[#868686]">Der Handel wurde für dieses Symbol deaktiviert</p>
            </Card>
            <Card title="Kalender">
              <div className="flex flex-col items-center h-[57px] pt-2.5 gap-[9px] text-[#868686]">
                <svg className="w-6 h-[22px]" viewBox="0 0 24 22" fill="currentColor">
                  <path d="M0 2h24v20H0zM1.500 7v13.500h21V7z" fillRule="evenodd" />
                  <path d="M4 0h1.500v3H4zM18.500 0H20v3h-1.500z" />
                  {[9, 13, 17].map((y) => [4, 7.5, 11, 14.5, 18].map((x) => <rect key={`${x}-${y}`} x={x} y={y} width="2" height="1.500" />))}
                </svg>
                <p>Keine Ereignisse</p>
              </div>
            </Card>
            <Card title="Symbolinfo">
              <table className="w-[239px] mx-auto">
                <tbody>
                  {SYMBOL_INFO.map(([name, value]) => (
                    <tr key={name} className="h-[17px] border-b border-[#404040]">
                      <th scope="row" className="text-left font-normal text-[#cacaca]">{name}</th>
                      <td className="text-right text-white">{value}</td>
                    </tr>
                  ))}
                </tbody>
              </table>
            </Card>
          </div>
          <div className="w-[11px] flex flex-col items-center pt-1 gap-1 pl-1">
            <svg className="w-[5px] h-1 text-[#8a8a8a]" viewBox="0 0 5 4" fill="currentColor"><path d="M0 4h5L2.500 0z" /></svg>
            <span className="w-[5px] h-[361px] rounded-full bg-[#8a8a8a]" />
          </div>
        </div>
      </div>
    </aside>
  );
}

/* ---------- page ---------- */

export default function App() {
  return (
    <div className="flex h-screen overflow-hidden bg-[#272727] font-['Liberation_Sans',Arial,sans-serif] text-[8px] leading-3">
      <Sidebar />
      <main className="flex-1 min-w-0 flex flex-col pl-[3px]">
        <div className="flex items-center justify-between">
          <Toolbar />
          <button className="flex items-center pr-2 text-white">
            <span className="size-1 mr-[7px] rounded-full bg-[#0b7d2c]" />
            <span className="text-[#2d8fdb] mr-0.5">Demo</span> • 9013255 • $ 187 657.21 • 1:50
            <Caret className="ml-[7px] text-[#8a8a8a]" />
          </button>
        </div>
        <div className="flex-1 min-h-0 flex">
          <div className="flex-1 min-w-0 flex flex-col">
            <div className="flex-1 min-h-0 flex gap-1">
              <ChartPanel />
              <DrawingTools />
            </div>
            <PositionsPanel />
          </div>
          <div className="w-1 shrink-0 flex flex-col items-end pt-[340px] gap-1">
            <span className="w-0.5 h-1 bg-[#777]" />
            <span className="w-0.5 h-0.5 bg-[#999]" />
            <span className="w-0.5 h-1 bg-[#777]" />
          </div>
          <SymbolPanel />
          <div className="w-[5px] shrink-0 border-r-2 border-[#3a3a3a]" />
        </div>
      </main>
    </div>
  );
}
